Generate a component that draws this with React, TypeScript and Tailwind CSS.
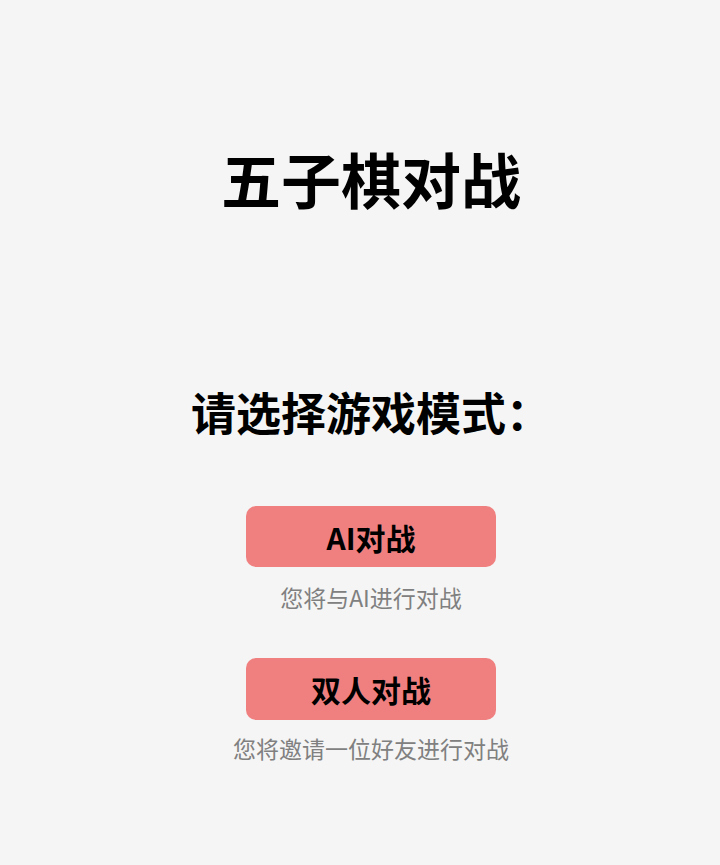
import React from "react";

export default function App() {
  return (
    <div
      className="min-h-[865px] w-full bg-[#f5f5f5] flex flex-col items-center text-black pl-[22px]"
      style={{ fontFamily: '"Noto Sans CJK SC", "Noto Sans", sans-serif' }}
    >
      <h1 className="mt-[142px] text-[60px] leading-[72px] font-bold">五子棋对战</h1>
      <h2 className="mt-[172px] text-[45px] leading-[52px] font-bold">请选择游戏模式：</h2>
      <div className="mt-[68px] flex flex-col items-center">
        <button className="w-[250px] h-[61px] rounded-[10px] bg-[#f08080] text-[30px] font-bold leading-none">
          AI对战
        </button>
        <p className="mt-[14px] text-[23px] leading-[32px] text-[#808080]">您将与AI进行对战</p>
      </div>
      <div className="mt-[45px] flex flex-col items-center">
        <button className="w-[250px] h-[62px] rounded-[10px] bg-[#f08080] text-[30px] font-bold leading-none">
          双人对战
        </button>
        <p className="mt-[12px] text-[23px] leading-[32px] text-[#808080]">您将邀请一位好友进行对战</p>
      </div>
    </div>
  );
}
